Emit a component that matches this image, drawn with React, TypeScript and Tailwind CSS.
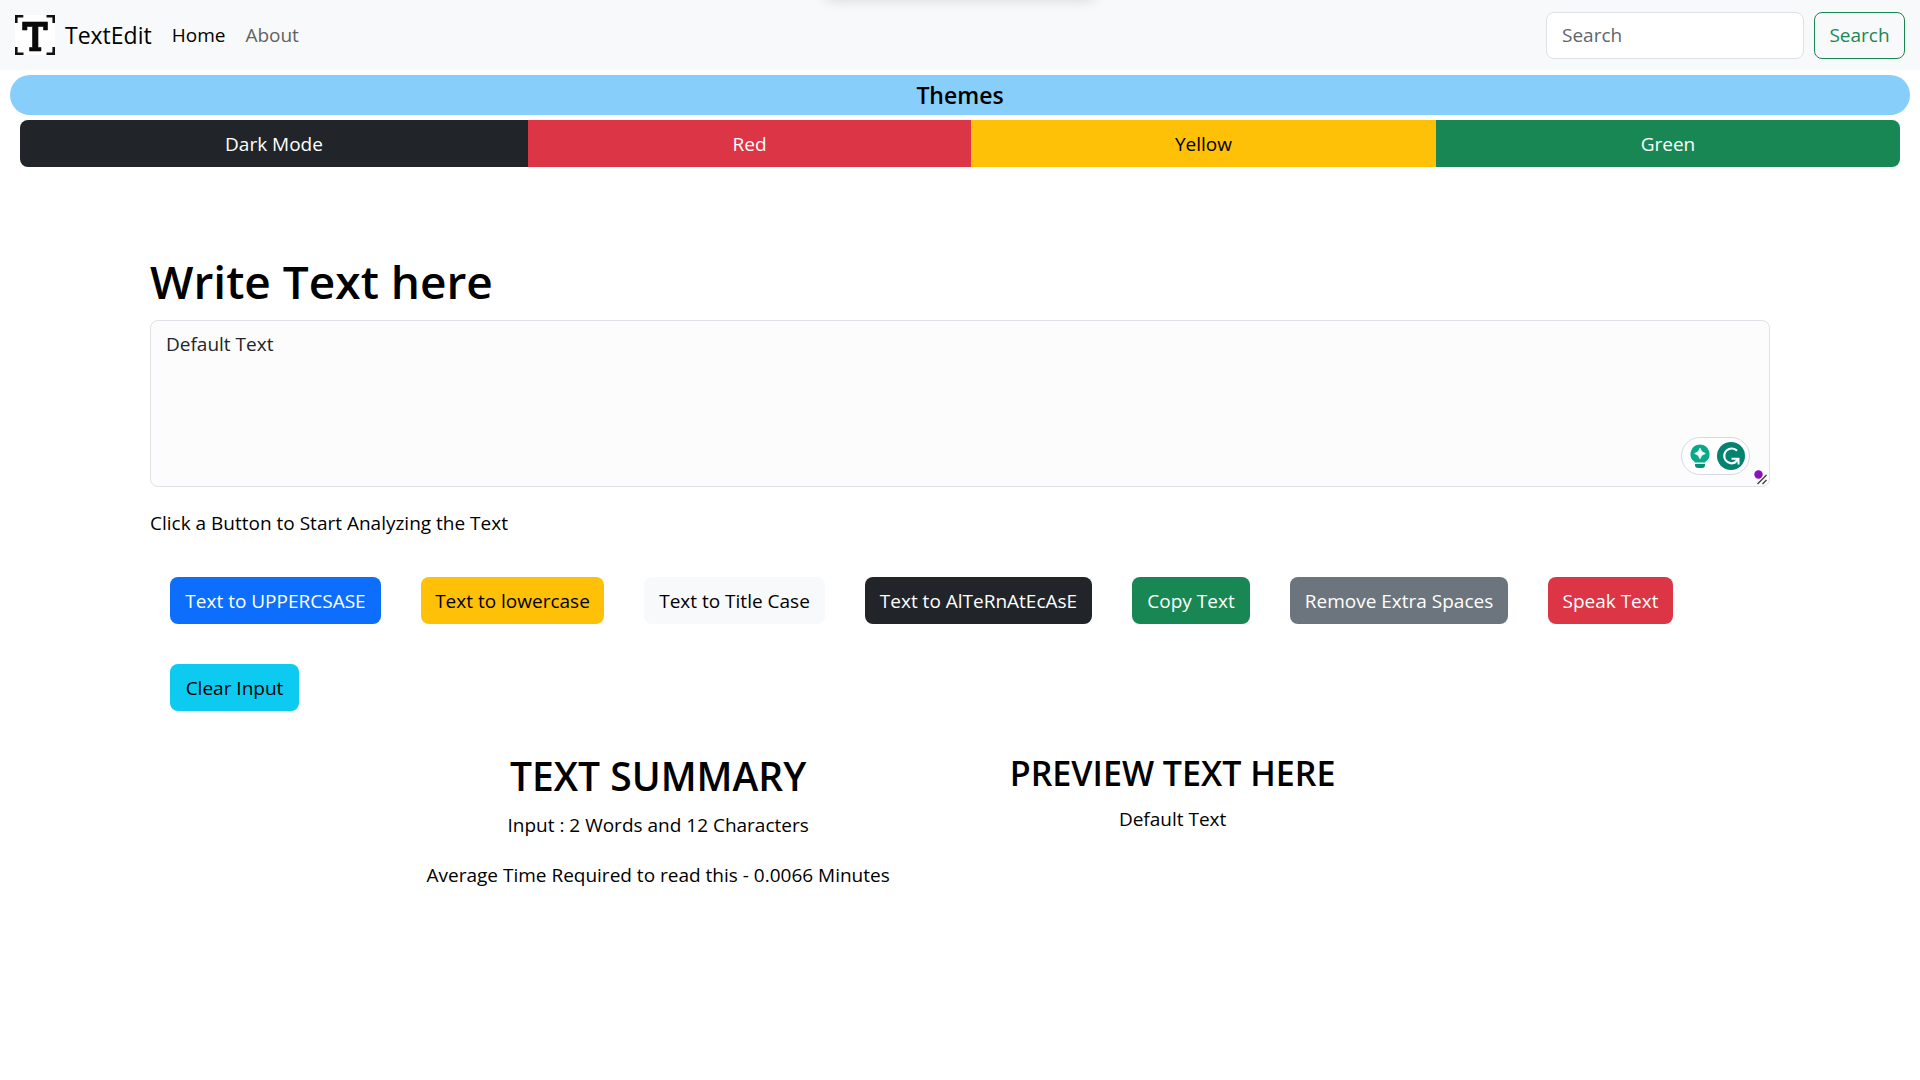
import { useState } from "react";

const themes = [
  { label: "Dark Mode", style: "basis-[508px] bg-[#212529] text-white" },
  { label: "Red", style: "basis-[443px] bg-[#dc3545] text-white" },
  { label: "Yellow", style: "basis-[465px] bg-[#ffc107] text-black" },
  { label: "Green", style: "basis-[464px] bg-[#198754] text-white" },
];

const actions = [
  { label: "Text to UPPERCSASE", style: "w-[211px] bg-[#0d6efd] text-white" },
  { label: "Text to lowercase", style: "w-[183px] bg-[#ffc107] text-black" },
  { label: "Text to Title Case", style: "w-[181px] bg-[#f8f9fa] text-black" },
  { label: "Text to AlTeRnAtEcAsE", style: "w-[227px] bg-[#212529] text-white" },
  { label: "Copy Text", style: "w-[118px] bg-[#198754] text-white" },
  { label: "Remove Extra Spaces", style: "w-[218px] bg-[#6c757d] text-white" },
  { label: "Speak Text", style: "w-[125px] bg-[#dc3545] text-white" },
  { label: "Clear Input", style: "w-[129px] bg-[#0dcaf0] text-black" },
];

function Logo() {
  return (
    <svg className="size-10 shrink-0" viewBox="0 0 40 40" aria-hidden="true">
      <rect width="40" height="40" fill="#fff" />
      <path
        d="M1.300 8V1.300h7M31.500 1.300h7.200V8M38.700 32v6.700h-7.200M8.500 38.700H1.300V32"
        fill="none"
        stroke="#111"
        strokeWidth="2.600"
      />
      <path
        d="M7.500 7h25v8h-4v-3.500h-5.500v21h3v3.500H14.500v-3.500h3v-21H12V15H7.500z"
        fill="#0a0a0a"
        stroke="#0a0a0a"
        strokeWidth=".6"
        strokeLinejoin="round"
      />
    </svg>
  );
}

function Navbar() {
  return (
    <nav className="relative flex h-[70px] items-center overflow-hidden bg-[#f8f9fa] px-[15px]">
      <div className="absolute -top-5 left-1/2 h-5 w-[270px] -translate-x-1/2 shadow-[0_0_14px_rgba(0,0,0,0.14)]" />
      <a href="#" className="flex items-center gap-[10px] text-[23px] leading-9 text-black">
        <Logo />
        TextEdit
      </a>
      <a href="#home" className="ml-5 text-black">Home</a>
      <a href="#about" className="ml-5 text-[#626364]">About</a>
      <form className="ml-auto flex gap-[10px]" onSubmit={(e) => e.preventDefault()}>
        <input
          type="search"
          aria-label="Search"
          placeholder="Search"
          className="h-[47px] w-[258px] rounded-lg border border-[#dee2e6] bg-white px-[15px] placeholder:text-[#5f656b]"
        />
        <button type="submit" className="h-[47px] w-[91px] rounded-lg border border-[#198754] text-[#198754]">
          Search
        </button>
      </form>
    </nav>
  );
}

function Assistant() {
  return (
    <>
      <div className="absolute right-[20px] bottom-[12px] flex h-[38px] w-[69px] items-center justify-between rounded-full border border-[#d6d8e7] bg-white pr-1 pl-2">
        <svg className="h-6 w-5" viewBox="0 0 20 24" aria-hidden="true">
          <path d="M10 .5a9.500 9.500 0 0 1 5.500 17.200l-.5.800H5l-.5-.8A9.500 9.500 0 0 1 10 .5z" fill="#08a888" />
          <path d="M10 4.200q1 4.300 5.300 5.300-4.300 1-5.300 5.300-1-4.300-5.300-5.300 4.300-1 5.300-5.300z" fill="#fff" stroke="#fff" strokeWidth=".8" />
          <path d="M5 20h10v1q0 3-3 3H8q-3 0-3-3z" fill="#078f78" />
        </svg>
        <svg className="size-7" viewBox="0 0 28 28" aria-hidden="true">
          <circle cx="14" cy="14" r="14" fill="#02826f" />
          <path d="M20 8.800A7.400 7.400 0 1 0 18.800 20" fill="none" stroke="#fff" strokeWidth="2.200" />
          <path d="M14.500 16.800h7v5.700M21 17l-3 3.500" fill="none" stroke="#fff" strokeWidth="2" />
        </svg>
      </div>
      <svg className="absolute right-[2px] bottom-[1px] h-4 w-[14px]" viewBox="0 0 14 16" aria-hidden="true">
        <circle cx="4.500" cy="4.500" r="4.200" fill="#8a0fbf" />
        <path d="M3.500 14L12.500 5M8.500 14l4-4" stroke="#fff" strokeWidth="3" />
        <path d="M3.500 14L12.500 5M8.500 14l4-4" stroke="#444" strokeWidth="1.500" />
      </svg>
    </>
  );
}

export default function App() {
  const [text, setText] = useState("Default Text");
  return (
    <div className="min-h-screen bg-white font-['Open_Sans',sans-serif] text-[19px] leading-[30px] text-black">
      <Navbar />
      <h5 className="mx-[10px] mt-[5px] h-10 rounded-full bg-[#87cefa] text-center text-[23px] leading-10 font-semibold">
        Themes
      </h5>
      <div role="group" aria-label="Themes" className="mx-5 mt-[5px] flex overflow-hidden rounded-lg">
        {themes.map((t) => (
          <button key={t.label} type="button" className={`h-[47px] grow ${t.style}`}>
            {t.label}
          </button>
        ))}
      </div>
      <main className="mx-auto mt-[85px] w-full max-w-[1650px] px-[15px]">
        <h1>
          <label htmlFor="text" className="block text-[46px] leading-[58px] font-semibold">Write Text here</label>
        </h1>
        <div className="relative mt-[10px]">
          <textarea
            id="text"
            value={text}
            onChange={(e) => setText(e.target.value)}
            className="block h-[167px] w-full resize-none rounded-lg border border-[#dee2e6] bg-[#fcfcfc] px-[15px] py-2 text-[#212529]"
          />
          <Assistant />
        </div>
        <p className="mt-[21px]">Click a Button to Start Analyzing the Text</p>
        <div className="mx-5 mt-[39px] flex flex-wrap gap-10">
          {actions.map((a) => (
            <button key={a.label} type="button" className={`h-[47px] rounded-lg whitespace-nowrap ${a.style}`}>
              {a.label}
            </button>
          ))}
        </div>
        <div className="mt-10 flex justify-center gap-[120px] pr-[158px] text-center">
          <section>
            <h2 className="text-[39px] leading-[50px] font-semibold">TEXT SUMMARY</h2>
            <p className="mt-[9px]">Input : 2 Words and 12 Characters</p>
            <p className="mt-5">Average Time Required to read this - 0.0066 Minutes</p>
          </section>
          <section>
            <h3 className="text-[34px] leading-[44px] font-semibold">PREVIEW TEXT HERE</h3>
            <p className="mt-[9px]">{text}</p>
          </section>
        </div>
      </main>
    </div>
  );
}
